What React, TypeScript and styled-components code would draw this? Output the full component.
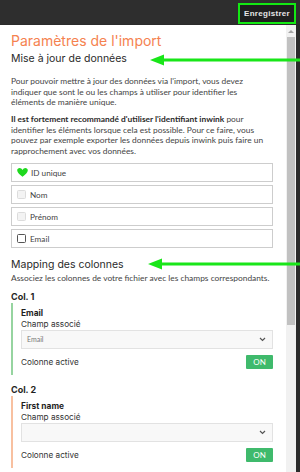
import styled, { createGlobalStyle } from "styled-components";

const Global = createGlobalStyle`
  html, body {
    margin: 0;
    padding: 0;
    background: #2b2b2b;
  }
  #root {
    width: 300px;
    height: 472px;
    overflow: hidden;
  }
`;

const Screen = styled.div`
  position: relative;
  display: flex;
  flex-direction: column;
  width: 300px;
  height: 472px;
  background: #2b2b2b;
`;

const TopBar = styled.div`
  display: flex;
  justify-content: flex-end;
  align-items: flex-end;
  height: 24px;
  padding-right: 4px;
  box-sizing: border-box;
  background: #2e2e2e;
`;

const SaveButton = styled.button`
  height: 21px;
  width: 58px;
  padding: 0;
  border: 2px solid #13e813;
  background: #1f1f1f;
  color: #e6e6e6;
  font-family: "Liberation Sans", sans-serif;
  font-weight: bold;
  font-size: 8px;
  letter-spacing: 0.3px;
`;

const Body = styled.div`
  display: flex;
  flex: 1;
  min-height: 0;
  margin-top: 1px;
`;

const Panel = styled.div`
  flex: 1;
  background: #fff;
  padding: 7px 13px 0 11px;
  overflow: hidden;
`;

const ScrollTrack = styled.div`
  width: 10px;
  background: #f1f1f1;
  display: flex;
  flex-direction: column;
  align-items: center;
  margin-right: 4px;
`;

const ScrollArrow = styled.div`
  width: 0;
  height: 0;
  margin: 5px 0 4px;
  border-left: 3px solid transparent;
  border-right: 3px solid transparent;
  border-bottom: 3px solid #a3a3a3;
`;

const ScrollThumb = styled.div`
  width: 8px;
  height: 288px;
  background: #c1c1c1;
`;

const Title = styled.h1`
  margin: 0;
  font-family: Inter, sans-serif;
  font-weight: 400;
  font-size: 14px;
  line-height: 17px;
  color: #f5824f;
`;

const SectionTitle = styled.h2<{ $gap: number }>`
  margin: ${(p) => p.$gap}px 0 0;
  font-family: Inter, sans-serif;
  font-weight: 400;
  font-size: 10.5px;
  line-height: 13px;
  color: #2a2a2a;
`;

const Para = styled.p<{ $gap: number; $inset?: number }>`
  margin: ${(p) => p.$gap}px 0 0;
  padding-right: ${(p) => p.$inset ?? 0}px;
  font-family: Lato, sans-serif;
  font-size: 8.4px;
  line-height: 10.5px;
  color: #444;
  b {
    color: #2a2a2a;
  }
`;

const Options = styled.div`
  margin-top: 7px;
  display: flex;
  flex-direction: column;
  gap: 3px;
`;

const OptionRow = styled.label`
  display: flex;
  align-items: center;
  gap: 3px;
  height: 19px;
  box-sizing: border-box;
  padding-left: 5px;
  border: 1px solid #cdcdcd;
  font-family: Lato, sans-serif;
  font-size: 8.2px;
  color: #444;
`;

const Box = styled.span<{ $disabled?: boolean }>`
  display: inline-block;
  width: 7px;
  height: 7px;
  border-radius: 1.5px;
  border: 1px solid ${(p) => (p.$disabled ? "#dcdcdc" : "#555")};
  background: ${(p) => (p.$disabled ? "#f3f3f3" : "#fff")};
  margin-right: 1px;
`;

const ColLabel = styled.div<{ $gap: number }>`
  margin-top: ${(p) => p.$gap}px;
  font-family: Inter, sans-serif;
  font-weight: 700;
  font-size: 9px;
  line-height: 10px;
  color: #1f1f1f;
`;

const ColBlock = styled.div<{ $accent: string }>`
  margin-top: 1px;
  padding: 5px 0 6px 8px;
  border-left: 2px solid ${(p) => p.$accent};
`;

const FieldName = styled.div`
  font-family: Inter, sans-serif;
  font-weight: 700;
  font-size: 8.4px;
  line-height: 10px;
  color: #1f1f1f;
`;

const FieldLabel = styled.div`
  margin-top: 1px;
  font-family: Inter, sans-serif;
  font-size: 8.2px;
  line-height: 10px;
  color: #333;
`;

const Select = styled.div`
  display: flex;
  align-items: center;
  justify-content: space-between;
  height: 19px;
  margin-top: 1px;
  padding: 0 6px 0 5px;
  box-sizing: border-box;
  background: #f8f8f8;
  border: 1px solid #e2e2e2;
  font-family: Lato, sans-serif;
  font-size: 7px;
  color: #777;
`;

const ActiveRow = styled.div`
  display: flex;
  align-items: center;
  justify-content: space-between;
  margin-top: 6px;
  font-family: Inter, sans-serif;
  font-size: 8.2px;
  color: #333;
`;

const OnToggle = styled.span`
  display: inline-flex;
  align-items: center;
  justify-content: center;
  width: 27px;
  height: 14px;
  border-radius: 1px;
  background: #3fba6c;
  color: #fff;
  font-family: Lato, sans-serif;
  font-size: 8px;
`;

const Arrow = styled.svg<{ $top: number; $left: number }>`
  position: absolute;
  top: ${(p) => p.$top}px;
  left: ${(p) => p.$left}px;
  pointer-events: none;
`;

const Chevron = () => (
  <svg width="7" height="5" viewBox="0 0 7 5">
    <path d="M1 1l2.5 2.5L6 1" fill="none" stroke="#555" strokeWidth="1.2" />
  </svg>
);

const Heart = () => (
  <svg width="11" height="9" viewBox="0 0 11 9">
    <path
      d="M5.5 8.8C3 6.6 0.2 4.6 0.2 2.4 0.2 1 1.3 0.1 2.6 0.1c1.2 0 2.3 0.8 2.9 1.9C6.1 0.9 7.2 0.1 8.4 0.1c1.3 0 2.4 0.9 2.4 2.3 0 2.2-2.8 4.2-5.3 6.4z"
      fill="#1fd81f"
    />
  </svg>
);

const GreenArrow = ({ top, left }: { top: number; left: number }) => (
  <Arrow $top={top} $left={left} width={300 - left} height="12" viewBox={`0 0 ${300 - left} 12`}>
    <path d={`M0 6 L14 0.5 L14 4.5 L${300 - left} 4.5 L${300 - left} 7.5 L14 7.5 L14 11.5 Z`} fill="#19e619" />
  </Arrow>
);

const columns = [
  { name: "Email", value: "Email", accent: "#96d4a0" },
  { name: "First name", value: "", accent: "#f8c0a0" },
];

export default function App() {
  return (
    <Screen>
      <Global />
      <TopBar>
        <SaveButton>Enregistrer</SaveButton>
      </TopBar>
      <Body>
        <Panel>
          <Title>Paramètres de l'import</Title>
          <SectionTitle $gap={3}>Mise à jour de données</SectionTitle>
          <Para $gap={11} $inset={6}>
            Pour pouvoir mettre à jour des données via l'import, vous devez indiquer que sont le ou
            les champs à utiliser pour identifier les éléments de manière unique.
          </Para>
          <Para $gap={6.5}>
            <b>Il est fortement recommandé d'utiliser l'identifiant inwink</b> pour identifier les
            éléments lorsque cela est possible. Pour ce faire, vous pouvez par exemple exporter les
            données depuis inwink puis faire un rapprochement avec vos données.
          </Para>
          <Options>
            <OptionRow>
              <Heart />
              ID unique
            </OptionRow>
            <OptionRow>
              <Box $disabled />
              Nom
            </OptionRow>
            <OptionRow>
              <Box $disabled />
              Prénom
            </OptionRow>
            <OptionRow>
              <Box />
              Email
            </OptionRow>
          </Options>
          <SectionTitle $gap={9.5}>Mapping des colonnes</SectionTitle>
          <Para $gap={2}>Associez les colonnes de votre fichier avec les champs correspondants.</Para>
          {columns.map((c, i) => (
            <div key={c.name}>
              <ColLabel $gap={i === 0 ? 8.5 : 10}>Col. {i + 1}</ColLabel>
              <ColBlock $accent={c.accent}>
                <FieldName>{c.name}</FieldName>
                <FieldLabel>Champ associé</FieldLabel>
                <Select>
                  <span>{c.value}</span>
                  <Chevron />
                </Select>
                <ActiveRow>
                  Colonne active
                  <OnToggle>ON</OnToggle>
                </ActiveRow>
              </ColBlock>
            </div>
          ))}
        </Panel>
        <ScrollTrack>
          <ScrollArrow />
          <ScrollThumb />
        </ScrollTrack>
      </Body>
      <GreenArrow top={54} left={150} />
      <GreenArrow top={258} left={148} />
    </Screen>
  );
}
